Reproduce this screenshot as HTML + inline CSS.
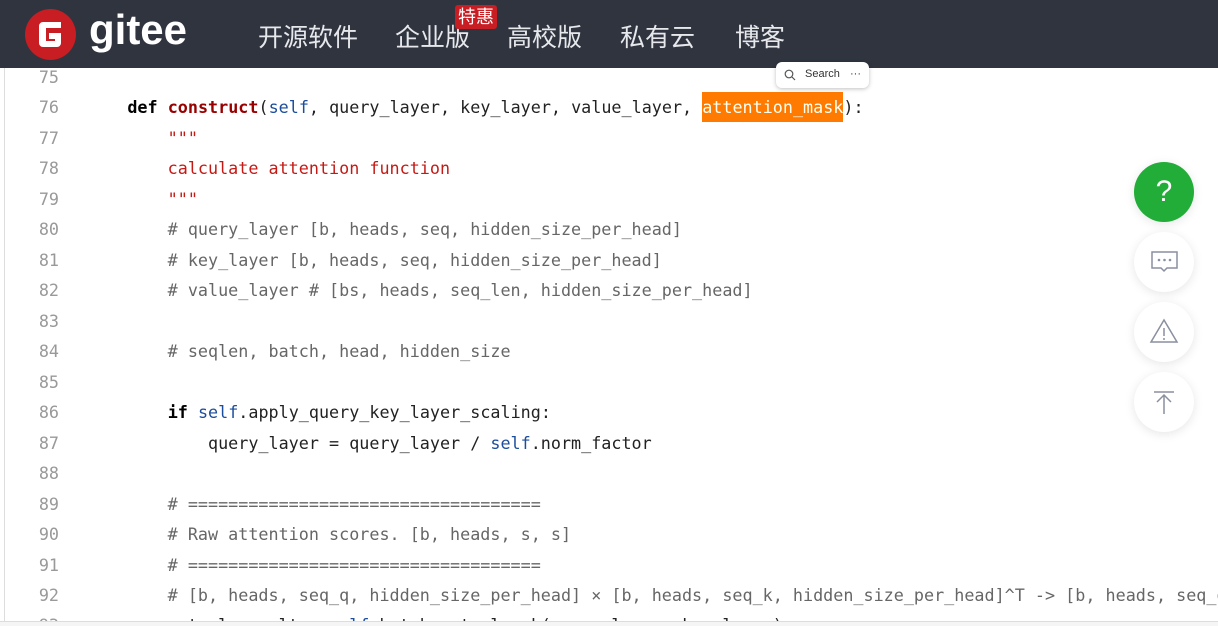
<!DOCTYPE html><html><head><style>
html,body{margin:0;width:1218px;height:626px;overflow:hidden}
body{background:#fff;position:relative;font-family:"Liberation Sans","Noto Sans CJK SC",sans-serif}
.hd{position:absolute;left:0;top:0;width:1218px;height:68px;background:#30343f}
.logo{position:absolute;left:25px;top:9px;width:51px;height:51px;border-radius:50%;background:#c71d23}
.gt{position:absolute;left:89px;top:6px;color:#fff;font-size:42px;font-weight:bold}
.nav{position:absolute;top:18px;color:#e6e8ec;font-size:25px}
.badge{position:absolute;left:455px;top:5px;background:#c71d23;color:#fff;font-size:18px;padding:0 3px;border-radius:3px;line-height:24px}
.code{position:absolute;left:0;top:62px;width:1218px;height:564px;overflow:hidden;font-family:"DejaVu Sans Mono",monospace;font-size:16.75px;line-height:30.47px;color:#222}
.ln{position:absolute;left:0;width:59px;text-align:right;color:#999}
.tx{position:absolute;left:87px;white-space:pre}
.c{color:#666}.s{color:#c41a16}.k{font-weight:bold;color:#000}.f{color:#990000;font-weight:bold}.b{color:#1c4d9c}
.hl{background:#ff7a00;color:#ffe;display:inline-block;line-height:30px}
.btn{position:absolute;left:1134px;width:60px;height:60px;border-radius:50%;background:#fff;box-shadow:0 2px 10px rgba(0,0,0,.1)}
</style></head><body>
<div style="position:absolute;left:4px;top:68px;width:1px;height:558px;background:#ddd"></div>
<div class="code">
<div class="ln" style="top:0">75</div>
<div class="ln" style="top:30.47px">76</div><div class="tx" style="top:30.47px">    <span class="k">def</span> <span class="f">construct</span>(<span class="b">self</span>, query_layer, key_layer, value_layer, <span class="hl">attention_mask</span>):</div>
<div class="ln" style="top:60.94px">77</div><div class="tx s" style="top:60.94px">        """</div>
<div class="ln" style="top:91.41px">78</div><div class="tx s" style="top:91.41px">        calculate attention function</div>
<div class="ln" style="top:121.88px">79</div><div class="tx s" style="top:121.88px">        """</div>
<div class="ln" style="top:152.35px">80</div><div class="tx c" style="top:152.35px">        # query_layer [b, heads, seq, hidden_size_per_head]</div>
<div class="ln" style="top:182.82px">81</div><div class="tx c" style="top:182.82px">        # key_layer [b, heads, seq, hidden_size_per_head]</div>
<div class="ln" style="top:213.29px">82</div><div class="tx c" style="top:213.29px">        # value_layer # [bs, heads, seq_len, hidden_size_per_head]</div>
<div class="ln" style="top:243.76px">83</div>
<div class="ln" style="top:274.23px">84</div><div class="tx c" style="top:274.23px">        # seqlen, batch, head, hidden_size</div>
<div class="ln" style="top:304.7px">85</div>
<div class="ln" style="top:335.17px">86</div><div class="tx" style="top:335.17px">        <span class="k">if</span> <span class="b">self</span>.apply_query_key_layer_scaling:</div>
<div class="ln" style="top:365.64px">87</div><div class="tx" style="top:365.64px">            query_layer = query_layer / <span class="b">self</span>.norm_factor</div>
<div class="ln" style="top:396.11px">88</div>
<div class="ln" style="top:426.58px">89</div><div class="tx c" style="top:426.58px">        # ===================================</div>
<div class="ln" style="top:457.05px">90</div><div class="tx c" style="top:457.05px">        # Raw attention scores. [b, heads, s, s]</div>
<div class="ln" style="top:487.52px">91</div><div class="tx c" style="top:487.52px">        # ===================================</div>
<div class="ln" style="top:517.99px">92</div><div class="tx c" style="top:517.99px">        # [b, heads, seq_q, hidden_size_per_head] × [b, heads, seq_k, hidden_size_per_head]^T -> [b, heads, seq_q, seq_k]</div>
<div class="ln" style="top:548.46px">93</div><div class="tx" style="top:548.46px">        matmul_result = <span class="b">self</span>.batch_matmul_q_k(query_layer, key_layer)</div>
</div>
<div style="position:absolute;left:0;top:621px;width:1218px;height:5px;background:#f5f5f5;border-top:1px solid #ddd"></div>
<div class="hd">
<div class="logo"><svg width="51" height="51" viewBox="0 0 51 51"><path d="M36 13H18a4 4 0 0 0-4 4v17a4 4 0 0 0 4 4h14a4 4 0 0 0 4-4v-10H24v6h6v2H21v-13h15z" fill="#fff"/></svg></div>
<div class="gt">gitee</div>
<div class="nav" style="left:258px">开源软件</div>
<div class="nav" style="left:395px">企业版</div>
<div class="badge">特惠</div>
<div class="nav" style="left:507px">高校版</div>
<div class="nav" style="left:620px">私有云</div>
<div class="nav" style="left:735px">博客</div>
</div>
<div style="position:absolute;left:776px;top:62px;width:93px;height:26px;background:#fff;border-radius:6px;box-shadow:0 1px 4px rgba(0,0,0,.25);font-size:11px;color:#333">
<svg style="position:absolute;left:8px;top:7px" width="12" height="12"><circle cx="5" cy="5" r="3.8" fill="none" stroke="#555" stroke-width="1.2"/><path d="M8 8l3 3" stroke="#555" stroke-width="1.2"/></svg>
<span style="position:absolute;left:29px;top:6px">Search</span><span style="position:absolute;left:74px;top:6px">···</span></div>
<div class="btn" style="top:162px;background:#22ac38;color:#fff;font-size:30px;text-align:center;line-height:60px">?</div>
<div class="btn" style="top:232px"><svg width="60" height="60"><path d="M18 20h25v16H33l-3 3-3-3H18z" fill="none" stroke="#8a8fa0" stroke-width="1.5"/><circle cx="25" cy="28" r="1.3" fill="#8a8fa0"/><circle cx="30.5" cy="28" r="1.3" fill="#8a8fa0"/><circle cx="36" cy="28" r="1.3" fill="#8a8fa0"/></svg></div>
<div class="btn" style="top:302px"><svg width="60" height="60"><path d="M30 18L17 40h26z" fill="none" stroke="#8a8fa0" stroke-width="1.5"/><path d="M30 26v8M30 36v2" stroke="#8a8fa0" stroke-width="1.5"/></svg></div>
<div class="btn" style="top:372px"><svg width="60" height="60"><path d="M20 20h20M30 42V23M23 30l7-7 7 7" fill="none" stroke="#8a8fa0" stroke-width="1.5"/></svg></div>
</body></html>
